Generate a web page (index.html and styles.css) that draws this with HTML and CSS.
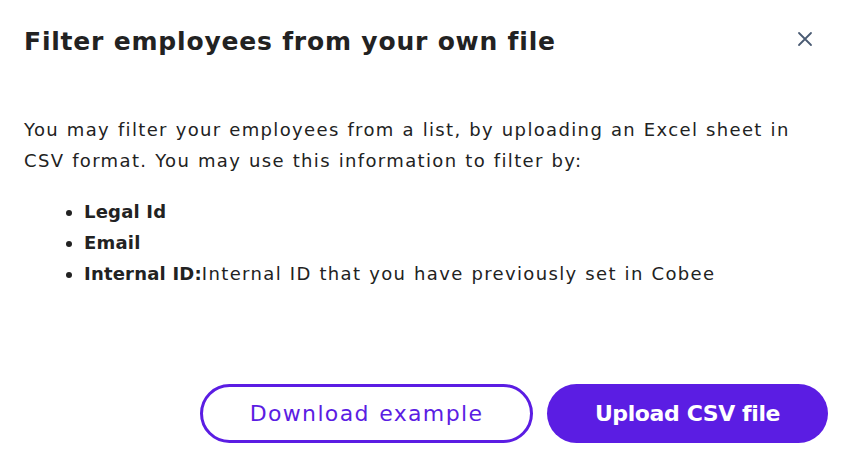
FILE: index.html
```html
<!DOCTYPE html>
<html lang="en">
<head>
<meta charset="utf-8">
<title>Filter employees</title>
<link rel="stylesheet" href="styles.css">
</head>
<body>
<div class="dialog">
  <div class="header">
    <h1 class="title">Filter employees from your own file</h1>
    <button class="close" aria-label="Close">
      <svg width="16" height="16" viewBox="0 0 16 16"><path d="M2 2L14 14M14 2L2 14" stroke="#4a5b73" stroke-width="1.8" stroke-linecap="round"/></svg>
    </button>
  </div>
  <div class="content">
    <p class="intro">You may filter your employees from a list, by uploading an Excel sheet in CSV format. You may use this information to filter by:</p>
    <ul class="list">
      <li><b>Legal Id</b></li>
      <li><b>Email</b></li>
      <li><b>Internal ID:</b>Internal ID that you have previously set in Cobee</li>
    </ul>
  </div>
  <div class="footer">
    <button class="btn btn-outline">Download example</button>
    <button class="btn btn-primary">Upload CSV file</button>
  </div>
</div>
</body>
</html>
```
FILE: styles.css
```css
html, body {
  margin: 0;
  padding: 0;
  background: #ffffff;
}
body {
  font-family: "DejaVu Sans", "Open Sans", sans-serif;
  color: #1f1f1f;
}
.dialog {
  width: 853px;
  height: 460px;
  box-sizing: border-box;
  padding: 22px 25px 17px 24px;
  display: flex;
  flex-direction: column;
}
.header {
  display: flex;
  justify-content: space-between;
  align-items: flex-start;
}
.title {
  margin: 0;
  font-size: 25px;
  font-weight: 700;
  line-height: 40px;
  letter-spacing: 0.8px;
  color: #222222;
}
.close {
  background: none;
  border: none;
  padding: 0;
  margin: 9px 15px 0 0;
  width: 16px;
  height: 16px;
  display: flex;
}
.content {
  flex: 1;
  padding-top: 52px;
}
.intro {
  margin: 0;
  font-size: 18px;
  line-height: 31px;
  letter-spacing: 1.35px;
  word-spacing: 0.7px;
  color: #222222;
  max-width: 800px;
}
.list {
  margin: 20px 0 0;
  padding-left: 60px;
  font-size: 18px;
  line-height: 31px;
  letter-spacing: 1.35px;
  word-spacing: 0.7px;
  color: #222222;
}
.list b {
  font-weight: 700;
  letter-spacing: 0.2px;
  word-spacing: 0;
}
.footer {
  display: flex;
  justify-content: flex-end;
  gap: 14px;
}
.btn {
  height: 59px;
  border-radius: 30px;
  font-family: inherit;
  font-size: 22px;
  box-sizing: border-box;
  cursor: pointer;
}
.btn-outline {
  width: 333px;
  background: #ffffff;
  border: 3px solid #5b1de3;
  color: #5b1de3;
  font-weight: 400;
  letter-spacing: 1.35px;
  word-spacing: 1px;
}
.btn-primary {
  width: 281px;
  background: #5b1de3;
  border: none;
  color: #ffffff;
  font-weight: 700;
  letter-spacing: -0.4px;
}
```
